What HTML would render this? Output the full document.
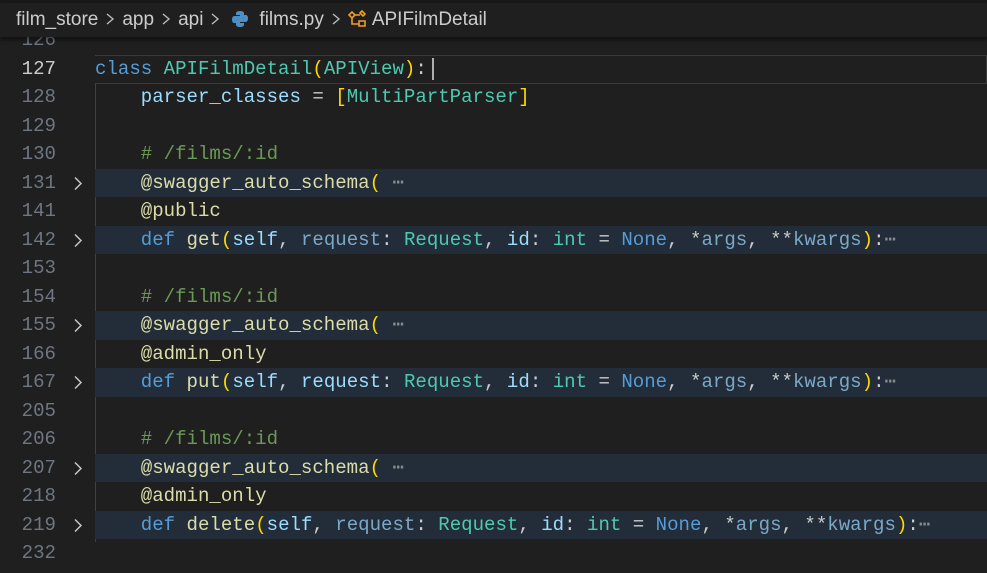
<!DOCTYPE html>
<html><head><meta charset="utf-8"><style>
*{margin:0;padding:0;box-sizing:border-box}
body{width:987px;height:573px;background:#1f1f1f;overflow:hidden;position:relative;font-family:"Liberation Mono",monospace}
.top{position:absolute;left:0;top:0;width:987px;height:3px;background:#181818}
.bc{position:absolute;left:0;top:3px;width:987px;height:34px;background:#1f1f1f;font-family:"Liberation Sans",sans-serif;font-size:19px;color:#cccccc;line-height:34px;padding-left:16px;white-space:nowrap;z-index:3;box-shadow:0 3px 4px rgba(0,0,0,.45)}
.bc .s{display:inline-block;width:24px;height:16px;vertical-align:-2px}
.ln{position:absolute;left:0;width:56px;text-align:right;color:#6e7681;font-size:19.07px;height:28.5px;line-height:28.5px}
.ln.cur{color:#cccccc}
.chev{position:absolute;left:72px;width:14px;height:28.5px}
.code{position:absolute;left:95px;white-space:pre;font-size:19.07px;height:28.5px;line-height:28.5px;color:#cccccc}
.fold{position:absolute;left:95px;right:0;height:28.5px;background:#222d39}
.guide{position:absolute;left:95px;width:1px;background:#404040}
.k{color:#569cd6}.c{color:#4ec9b0}.f{color:#dcdcaa}.b{color:#ffd700}.v{color:#9cdcfe}.p{color:#7ca8c8}.cm{color:#6a9955}.d{color:#8b8b8b}
</style></head><body>
<div class="top"></div>
<div class="bc">film_store<svg class="s" viewBox="0 0 24 16"><path d="M9 3l6 5-6 5" fill="none" stroke="#bbb" stroke-width="1.4"/></svg>app<svg class="s" viewBox="0 0 24 16"><path d="M9 3l6 5-6 5" fill="none" stroke="#bbb" stroke-width="1.4"/></svg>api<svg class="s" viewBox="0 0 24 16"><path d="M9 3l6 5-6 5" fill="none" stroke="#bbb" stroke-width="1.4"/></svg><svg width="18" height="18" viewBox="0 0 18 18" style="vertical-align:-3px;margin:0 10px 0 4px"><path d="M9 1C5 1 5 3 5 3v2h4v1H3.5S1 6 1 9.5 3 13 3 13h2v-2s0-2 2-2h4s2 0 2-2V3s0-2-4-2z" fill="#4d8fc4"/><path d="M9 17c4 0 4-2 4-2v-2H9v-1h5.5s2.5 0 2.5-3.5S15 5 15 5h-2v2s0 2-2 2H7s-2 0-2 2v4s0 2 4 2z" fill="#4d8fc4"/></svg>films.py<svg class="s" viewBox="0 0 24 16"><path d="M9 3l6 5-6 5" fill="none" stroke="#bbb" stroke-width="1.4"/></svg><svg width="20" height="18" viewBox="0 0 20 18" style="vertical-align:-3px;margin:0 4px 0 0"><g fill="none" stroke="#ee9d28" stroke-width="1.6"><path d="M1 5l3-3 3 3-3 3z"/><path d="M12 3l2-2 3 3-2 2z"/><path d="M11 11h6v5h-6z"/><path d="M6 5h6M4 8v6h7"/></g></svg>APIFilmDetail</div>

<div style="position:absolute;left:95px;right:0;top:54.5px;height:29px;border:1px solid #3a3a3a;border-left:none"></div>
<div class="guide" style="top:83px;height:459px"></div>

<div class="fold" style="top:168.5px"></div>
<div class="fold" style="top:225.5px"></div>
<div class="fold" style="top:311px"></div>
<div class="fold" style="top:368px"></div>
<div class="fold" style="top:453.5px"></div>
<div class="fold" style="top:510.5px"></div>

<div class="ln" style="top:26px">126</div>
<div class="ln cur" style="top:54.5px">127</div>
<div class="ln" style="top:83px">128</div>
<div class="ln" style="top:111.5px">129</div>
<div class="ln" style="top:140px">130</div>
<div class="ln" style="top:168.5px">131</div>
<div class="ln" style="top:197px">141</div>
<div class="ln" style="top:225.5px">142</div>
<div class="ln" style="top:254px">153</div>
<div class="ln" style="top:282.5px">154</div>
<div class="ln" style="top:311px">155</div>
<div class="ln" style="top:339.5px">166</div>
<div class="ln" style="top:368px">167</div>
<div class="ln" style="top:396.5px">205</div>
<div class="ln" style="top:425px">206</div>
<div class="ln" style="top:453.5px">207</div>
<div class="ln" style="top:482px">218</div>
<div class="ln" style="top:510.5px">219</div>
<div class="ln" style="top:539px">232</div>

<svg class="chev" style="top:168.5px" viewBox="0 0 14 28.5"><path d="M3 8.5l6 6-6 6" fill="none" stroke="#c5c5c5" stroke-width="1.5"/></svg>
<svg class="chev" style="top:225.5px" viewBox="0 0 14 28.5"><path d="M3 8.5l6 6-6 6" fill="none" stroke="#c5c5c5" stroke-width="1.5"/></svg>
<svg class="chev" style="top:311px" viewBox="0 0 14 28.5"><path d="M3 8.5l6 6-6 6" fill="none" stroke="#c5c5c5" stroke-width="1.5"/></svg>
<svg class="chev" style="top:368px" viewBox="0 0 14 28.5"><path d="M3 8.5l6 6-6 6" fill="none" stroke="#c5c5c5" stroke-width="1.5"/></svg>
<svg class="chev" style="top:453.5px" viewBox="0 0 14 28.5"><path d="M3 8.5l6 6-6 6" fill="none" stroke="#c5c5c5" stroke-width="1.5"/></svg>
<svg class="chev" style="top:510.5px" viewBox="0 0 14 28.5"><path d="M3 8.5l6 6-6 6" fill="none" stroke="#c5c5c5" stroke-width="1.5"/></svg>

<div class="code" style="top:54.5px"><span class="k">class</span> <span class="c">APIFilmDetail</span><span class="b">(</span><span class="c">APIView</span><span class="b">)</span>:</div>
<div style="position:absolute;left:432px;top:58px;width:2px;height:22px;background:#aeafad"></div>
<div class="code" style="top:83px">    <span class="v">parser_classes</span> = <span class="b">[</span><span class="c">MultiPartParser</span><span class="b">]</span></div>
<div class="code" style="top:140px">    <span class="cm"># /films/:id</span></div>
<div class="code" style="top:168.5px">    <span class="f">@swagger_auto_schema</span><span class="b">(</span> <span class="d">⋯</span></div>
<div class="code" style="top:197px">    <span class="f">@public</span></div>
<div class="code" style="top:225.5px">    <span class="k">def</span> <span class="f">get</span><span class="b">(</span><span class="v">self</span>, <span class="p">request</span>: <span class="c">Request</span>, <span class="v">id</span>: <span class="c">int</span> = <span class="k">None</span>, *<span class="p">args</span>, **<span class="p">kwargs</span><span class="b">)</span>:<span class="d">⋯</span></div>
<div class="code" style="top:282.5px">    <span class="cm"># /films/:id</span></div>
<div class="code" style="top:311px">    <span class="f">@swagger_auto_schema</span><span class="b">(</span> <span class="d">⋯</span></div>
<div class="code" style="top:339.5px">    <span class="f">@admin_only</span></div>
<div class="code" style="top:368px">    <span class="k">def</span> <span class="f">put</span><span class="b">(</span><span class="v">self</span>, <span class="v">request</span>: <span class="c">Request</span>, <span class="v">id</span>: <span class="c">int</span> = <span class="k">None</span>, *<span class="p">args</span>, **<span class="p">kwargs</span><span class="b">)</span>:<span class="d">⋯</span></div>
<div class="code" style="top:425px">    <span class="cm"># /films/:id</span></div>
<div class="code" style="top:453.5px">    <span class="f">@swagger_auto_schema</span><span class="b">(</span> <span class="d">⋯</span></div>
<div class="code" style="top:482px">    <span class="f">@admin_only</span></div>
<div class="code" style="top:510.5px">    <span class="k">def</span> <span class="f">delete</span><span class="b">(</span><span class="v">self</span>, <span class="p">request</span>: <span class="c">Request</span>, <span class="v">id</span>: <span class="c">int</span> = <span class="k">None</span>, *<span class="p">args</span>, **<span class="p">kwargs</span><span class="b">)</span>:<span class="d">⋯</span></div>
</body></html>
